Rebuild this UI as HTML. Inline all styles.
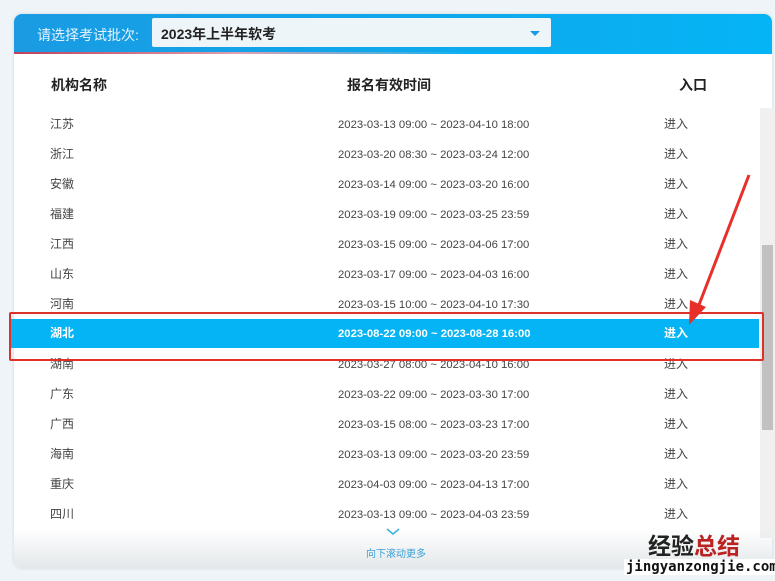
<!DOCTYPE html><html><head><meta charset="utf-8"><style>
body{margin:0;width:775px;height:581px;background:#eef4f7;font-family:"Liberation Sans","Noto Sans CJK SC",sans-serif;position:relative;overflow:hidden}
.card{position:absolute;left:14px;top:14px;width:758px;height:554px;background:#fff;border-radius:8px;overflow:hidden;box-shadow:0 0 3px #cfd8dc}
.hd{position:absolute;left:0;top:0;width:758px;height:38px;background:linear-gradient(90deg,#1a9be2,#05b4f5);border-bottom:2px solid;border-image:linear-gradient(90deg,#c0405a,#e0a0b0 30%,#05b4f5 60%) 1}
.lbl{position:absolute;left:23px;top:11px;color:#e6f4ff;font-size:14px}
.sel{position:absolute;left:138px;top:4px;width:399px;height:29px;background:#eef5f8;border-radius:2px}
.sel span{position:absolute;left:9px;top:6px;font-size:14px;font-weight:bold;color:#222}
.tri{position:absolute;right:11px;top:13px;border:5px solid transparent;border-top:5px solid #1a9be2;border-bottom:0}
.t{position:absolute;font-size:12px;color:#444;white-space:nowrap;line-height:16px}
.c2{font-size:11.3px;margin-top:1px}
.h{position:absolute;font-size:14px;font-weight:bold;color:#222;top:75px}
.c1{left:50px}.c2{left:338px}.c3{left:664px}
.hl{position:absolute;left:11px;top:319px;width:748px;height:29px;background:#05b4f5}
.hl .t{color:#fff;font-weight:bold;top:6px}
.sb{position:absolute;left:760px;top:108px;width:15px;height:430px;background:#f0f0f0}
.th{position:absolute;left:762px;top:245px;width:11px;height:185px;background:#c1c1c1}
.fade{position:absolute;left:14px;top:528px;width:758px;height:40px;background:linear-gradient(#fff0,#e4e8ea);border-radius:0 0 8px 8px}
</style></head><body>
<div class="card"><div class="hd"><div class="lbl">请选择考试批次:</div><div class="sel"><span>2023年上半年软考</span><div class="tri"></div></div></div></div>
<div class="h" style="left:51px">机构名称</div><div class="h" style="left:347px">报名有效时间</div><div class="h" style="left:679px">入口</div>
<div class="sb"></div><div class="th"></div>
<div class="t c1" style="top:116px">江苏</div><div class="t c2" style="top:116px">2023-03-13 09:00 ~ 2023-04-10 18:00</div><div class="t c3" style="top:116px">进入</div>
<div class="t c1" style="top:146px">浙江</div><div class="t c2" style="top:146px">2023-03-20 08:30 ~ 2023-03-24 12:00</div><div class="t c3" style="top:146px">进入</div>
<div class="t c1" style="top:176px">安徽</div><div class="t c2" style="top:176px">2023-03-14 09:00 ~ 2023-03-20 16:00</div><div class="t c3" style="top:176px">进入</div>
<div class="t c1" style="top:206px">福建</div><div class="t c2" style="top:206px">2023-03-19 09:00 ~ 2023-03-25 23:59</div><div class="t c3" style="top:206px">进入</div>
<div class="t c1" style="top:236px">江西</div><div class="t c2" style="top:236px">2023-03-15 09:00 ~ 2023-04-06 17:00</div><div class="t c3" style="top:236px">进入</div>
<div class="t c1" style="top:266px">山东</div><div class="t c2" style="top:266px">2023-03-17 09:00 ~ 2023-04-03 16:00</div><div class="t c3" style="top:266px">进入</div>
<div class="t c1" style="top:296px">河南</div><div class="t c2" style="top:296px">2023-03-15 10:00 ~ 2023-04-10 17:30</div><div class="t c3" style="top:296px">进入</div>
<div class="t c1" style="top:356px">湖南</div><div class="t c2" style="top:356px">2023-03-27 08:00 ~ 2023-04-10 16:00</div><div class="t c3" style="top:356px">进入</div>
<div class="t c1" style="top:386px">广东</div><div class="t c2" style="top:386px">2023-03-22 09:00 ~ 2023-03-30 17:00</div><div class="t c3" style="top:386px">进入</div>
<div class="t c1" style="top:416px">广西</div><div class="t c2" style="top:416px">2023-03-15 08:00 ~ 2023-03-23 17:00</div><div class="t c3" style="top:416px">进入</div>
<div class="t c1" style="top:446px">海南</div><div class="t c2" style="top:446px">2023-03-13 09:00 ~ 2023-03-20 23:59</div><div class="t c3" style="top:446px">进入</div>
<div class="t c1" style="top:476px">重庆</div><div class="t c2" style="top:476px">2023-04-03 09:00 ~ 2023-04-13 17:00</div><div class="t c3" style="top:476px">进入</div>
<div class="t c1" style="top:506px">四川</div><div class="t c2" style="top:506px">2023-03-13 09:00 ~ 2023-04-03 23:59</div><div class="t c3" style="top:506px">进入</div>
<div class="hl"><div class="t" style="left:39px">湖北</div><div class="t" style="left:327px;font-size:11.3px;margin-top:1px">2023-08-22 09:00 ~ 2023-08-28 16:00</div><div class="t" style="left:653px">进入</div></div>
<div class="fade"></div>
<div style="position:absolute;left:9px;top:312px;width:751px;height:45px;border:2px solid #e0302a;border-radius:2px"></div>
<svg style="position:absolute;left:0;top:0" width="775" height="581"><path d="M749 175 L697 310" stroke="#e8302a" stroke-width="3"/><path d="M689 325 L690 300 L706 307 Z" fill="#e8302a"/><path d="M387 529 l6 5 l6 -5" stroke="#3ab0e0" stroke-width="1.5" fill="none"/></svg>
<div class="t" style="left:366px;top:547px;font-size:10px;color:#3aa0d8">向下滚动更多</div>
<div style="position:absolute;left:648px;top:530px;font-size:23px;font-weight:bold;color:#222;font-family:'Noto Sans CJK SC',sans-serif;line-height:28px">经验<span style="color:#b22">总结</span></div>
<div style="position:absolute;left:624px;top:559px;font-size:14px;font-weight:bold;color:#111;font-family:'DejaVu Sans Mono',monospace;background:#fff;padding:0 2px">jingyanzongjie.com</div>
</body></html>
